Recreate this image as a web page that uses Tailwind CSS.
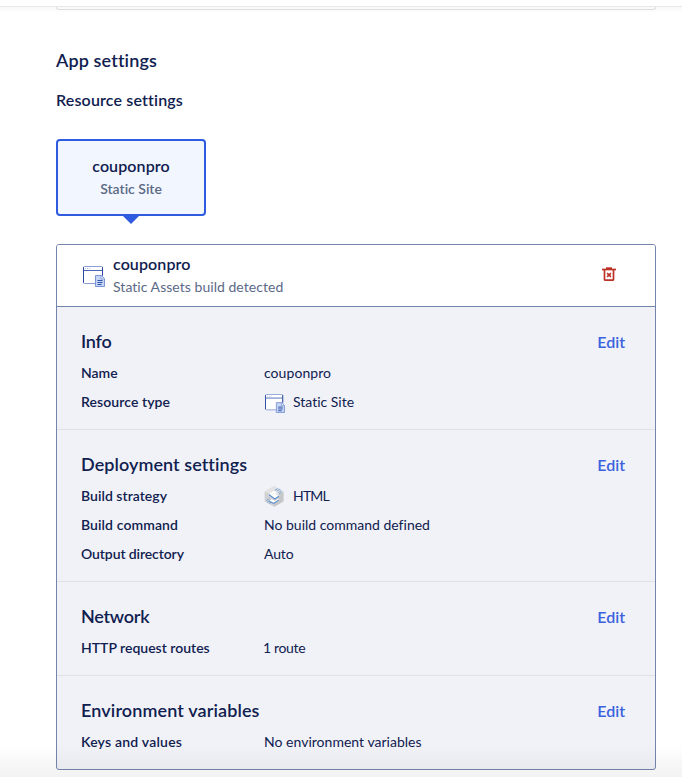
<!DOCTYPE html>
<html lang="en">
<head>
<meta charset="utf-8">
<title>App settings</title>
<script src="https://cdn.jsdelivr.net/npm/@tailwindcss/browser@4"></script>
</head>
<body class="relative h-[777px] overflow-hidden bg-white font-['Lato','Liberation_Sans',sans-serif] text-[#10204f] [font-variant-ligatures:none]">
<svg class="hidden">
  <symbol id="site" viewBox="0 0 22 21">
    <rect x=".5" y=".5" width="19" height="17" rx="1" fill="#fff" stroke="#8b9fd6"/>
    <path d="M.5 1.200v15.600M19.500 1.200v8.300" fill="none" stroke="#2b479c"/>
    <path d="M1 4.500h18" stroke="#4766b5"/>
    <path d="M2.200 2.500h1M4.200 2.500h1M6.200 2.500h1" stroke="#b3c0e6"/>
    <path d="M12.500 9.500h5.800l3.200 3.100v7.900h-9z" fill="#c5d5f5" stroke="#7d96d3"/>
    <path d="M18 9.600v3.300h3.200" fill="#e7eefc" stroke="#7d96d3" stroke-width=".8"/>
    <path d="M14.500 14.500h5M14.500 16.500h5M14.500 18.500h4" stroke="#3153a8"/>
  </symbol>
</svg>

<header class="h-[7px] border-b border-[#e9e9e9] bg-white"></header>
<div class="h-[6px] bg-linear-to-b from-[#f8f8f8] to-white">
  <div class="ml-14 h-[3px] w-[600px] rounded-b-[3px] border-x border-b border-[#dcdddf]"></div>
</div>

<main class="ml-14 w-[600px]">
  <h1 class="mt-[35px] h-6 text-[18px] leading-6 font-semibold tracking-[0.12px]">App settings</h1>
  <h2 class="mt-4 h-6 text-[16px] leading-6 font-semibold tracking-[0.16px]">Resource settings</h2>

  <div class="mt-[27px] flex h-[77px] w-[150px] flex-col items-center rounded-[4px] border-2 border-[#2f5be0] bg-[#f2f7ff] pt-[13px]">
    <div class="h-6 text-[16px] leading-6 font-semibold tracking-[0.1px]">couponpro</div>
    <div class="h-[22px] text-[14px] leading-[22px] font-semibold text-[#5b6987]">Static Site</div>
  </div>
  <svg class="ml-[67px] h-2 w-4" viewBox="0 0 16 8"><path d="M0 0h16L8 8z" fill="#2f5be0"/></svg>

  <section class="mt-5 h-[526px] rounded-[3px] border border-[#7584ad] bg-[#f1f2f8]">
    <div class="flex h-[62px] items-start rounded-t-[2px] border-b border-[#7584ad] bg-white pl-[26px]">
      <svg class="mt-[21px] h-[21px] w-[22px]"><use href="#site"/></svg>
      <div class="ml-2 flex-1 pt-[7px]">
        <div class="h-6 text-[16px] leading-6 font-semibold tracking-[0.1px]">couponpro</div>
        <div class="h-[22px] text-[14px] leading-[22px] tracking-[0.04px] text-[#5b6987]">Static Assets build detected</div>
      </div>
      <svg class="mt-[22px] mr-[39px] h-[14px] w-[14px]" viewBox="0 0 14 14" fill="none" stroke="#bd3125">
        <path d="M0 2.500h14" stroke-width="1.700"/>
        <path d="M4 1.300h6" stroke-width="2"/>
        <path d="M2.500 3v9.200q0 1 1 1h7q1 0 1-1V3" stroke-width="1.700"/>
        <path d="M5.100 6.100l3.800 3.800M8.900 6.100L5.100 9.900" stroke-width="1.600"/>
      </svg>
    </div>

    <div class="border-b border-[#dfe1e8] pt-[23px] pr-[30px] pb-[13px] pl-6">
      <div class="mb-1 flex h-6 justify-between leading-6"><h3 class="-mt-px text-[18px] font-semibold tracking-[-0.2px]">Info</h3><a class="text-[16px] font-semibold text-[#3a62de]">Edit</a></div>
      <div class="flex h-[29px] items-center text-[14px]"><div class="w-[183px] font-semibold">Name</div><div class="tracking-[0.06px]">couponpro</div></div>
      <div class="flex h-[29px] items-center text-[14px]"><div class="w-[184px] font-semibold tracking-[0.08px]">Resource type</div><svg class="mt-[3px] mr-2 h-[19px] w-5" viewBox="0 0 22 21"><use href="#site" width="22" height="21"/></svg><div>Static Site</div></div>
    </div>

    <div class="border-b border-[#dfe1e8] pt-[23px] pr-[30px] pb-[13px] pl-6">
      <div class="mb-1 flex h-6 justify-between leading-6"><h3 class="-mt-px text-[18px] font-semibold tracking-[0.06px]">Deployment settings</h3><a class="text-[16px] font-semibold text-[#3a62de]">Edit</a></div>
      <div class="flex h-[29px] items-center text-[14px]"><div class="w-[183px] font-semibold tracking-[0.04px]">Build strategy</div>
        <svg class="mt-0.5 mr-[9px] h-[21px] w-5" viewBox="0 0 20 21">
          <path d="M10 .3l9.400 5.100v10.200L10 20.700.6 15.600V5.400z" fill="#d0d1d2"/>
          <path d="M10 .3l9.400 5.100L10 10.500.6 5.400z" fill="#e2e3e2"/>
          <path d="M19.400 5.400v10.200L10 20.700v-5z" fill="#c4c6c8"/>
          <path d="M10.400 4.700l3.400-2.200M12.600 5.300l3.600-2.400M14.400 6.500l3-2M15 8l2.500-1.700M2.500 14.500l3-2M3.300 16.200l3.500-2.300M5 17.600l3-2" stroke="#6e9bd4" stroke-width=".9"/>
          <path d="M5 8l5-3.500 3 1.500-2.300 1.700 4.300 2-4.200 3z" fill="#fff"/>
          <path d="M5 8l5.800 4.200 4.200-2.700v1.300l-4.200 2.900L5 9.600z" fill="#5f90cf"/>
          <path d="M4.800 11.600l6 3.500 3.800-2.900v1.900L9.600 17l-4.300-2.200 2.300-1.400z" fill="#fff"/>
          <path d="M5.300 14.800l4.400 2 4.900-3.200v1.200l-4.800 3.300-4.500-2.200z" fill="#5f90cf"/>
        </svg><div class="tracking-[-0.8px]">HTML</div></div>
      <div class="flex h-[29px] items-center text-[14px]"><div class="w-[183px] font-semibold tracking-[0.1px]">Build command</div><div>No build command defined</div></div>
      <div class="flex h-[29px] items-center text-[14px]"><div class="w-[183px] font-semibold tracking-[-0.1px]">Output directory</div><div class="tracking-[-0.15px]">Auto</div></div>
    </div>

    <div class="border-b border-[#dfe1e8] pt-[23px] pr-[30px] pb-[13px] pl-6">
      <div class="mb-1 flex h-6 justify-between leading-6"><h3 class="-mt-px text-[18px] font-semibold tracking-[-0.25px]">Network</h3><a class="text-[16px] font-semibold text-[#3a62de]">Edit</a></div>
      <div class="flex h-[29px] items-center text-[14px]"><div class="w-[183px] font-semibold">HTTP request routes</div><div class="-ml-px tracking-[-0.35px]">1 route</div></div>
    </div>

    <div class="pt-[23px] pr-[30px] pl-6">
      <div class="mb-1 flex h-6 justify-between leading-6"><h3 class="-mt-px text-[18px] font-semibold tracking-[0.12px]">Environment variables</h3><a class="text-[16px] font-semibold text-[#3a62de]">Edit</a></div>
      <div class="flex h-[29px] items-center text-[14px]"><div class="w-[183px] font-semibold tracking-[0.22px]">Keys and values</div><div class="tracking-[0.02px]">No environment variables</div></div>
    </div>
  </section>
</main>
<div class="pointer-events-none absolute inset-x-0 bottom-0 h-8 bg-linear-to-b from-black/0 to-black/5"></div>
</body>
</html>
